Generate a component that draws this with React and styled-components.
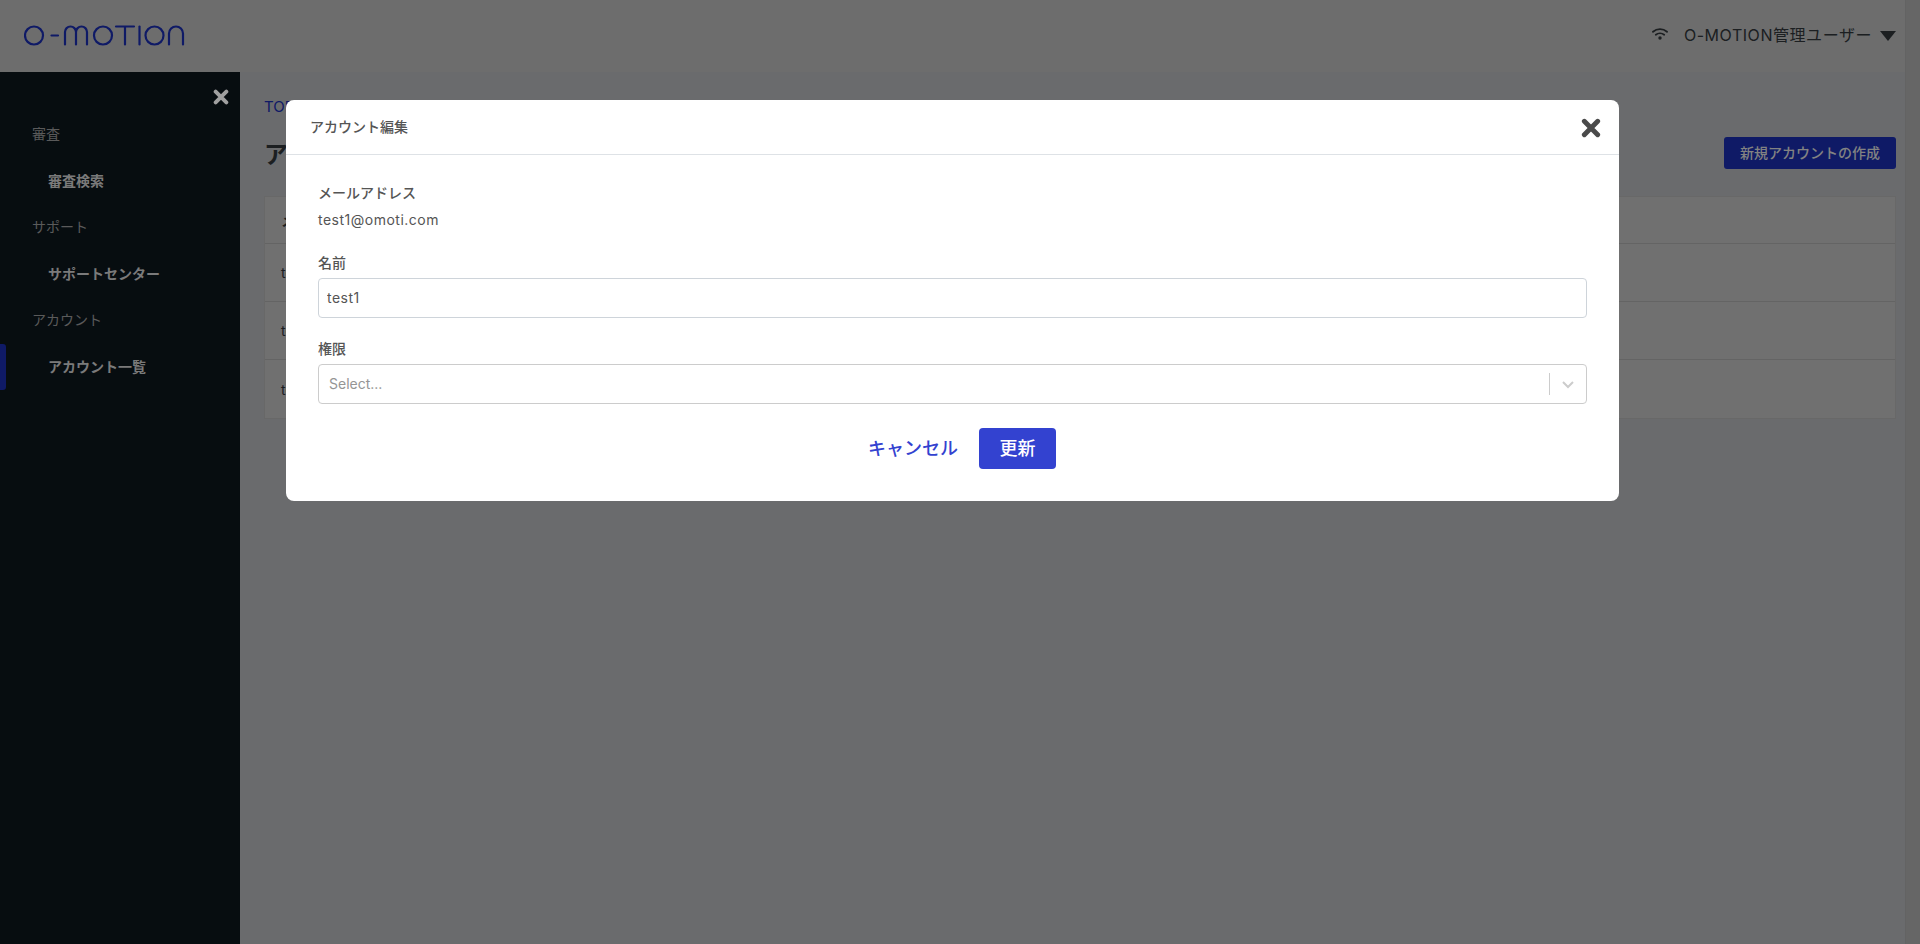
import React from "react";
import styled, { createGlobalStyle } from "styled-components";

const GlobalStyle = createGlobalStyle`
  html, body {
    margin: 0;
    height: 100%;
    overflow: hidden;
  }
  body {
    font-family: Inter, "Noto Sans CJK JP", sans-serif;
    color: #2b3034;
  }
  * {
    box-sizing: border-box;
  }
`;

const Page = styled.div`
  position: relative;
  display: flex;
  width: 1920px;
  height: 944px;
  overflow: hidden;
  background: #a3a5a8;
`;

const Frame = styled.div`
  display: flex;
  flex-direction: column;
  flex: 1;
  min-width: 0;
`;

const ScrollTrack = styled.div`
  width: 15px;
  background: #9d9d9d;
  border-left: 1px solid #999999;
`;

const Header = styled.header`
  display: flex;
  align-items: center;
  justify-content: space-between;
  height: 72px;
  padding: 0 9px 4px 24px;
  background: #a8a8a8;
`;

const LogoWrap = styled.div`
  display: flex;
  padding-top: 2px;
`;

const UserMenu = styled.div`
  display: flex;
  align-items: center;
  font-size: 16px;
  letter-spacing: 0.55px;
  color: #2b3034;
`;

const UserName = styled.span`
  margin: 0 8px 0 16px;
`;

const Caret = styled.span`
  width: 0;
  height: 0;
  border-left: 8px solid transparent;
  border-right: 8px solid transparent;
  border-top: 10px solid #2b3034;
  margin-top: 3px;
`;

const Body = styled.div`
  display: flex;
  flex: 1;
  min-height: 0;
`;

const Sidebar = styled.nav`
  position: relative;
  width: 240px;
  flex-shrink: 0;
  padding-top: 41px;
  background: #0c141a;
`;

const SidebarClose = styled.button`
  position: absolute;
  top: 17px;
  right: 11px;
  display: flex;
  padding: 0;
  border: 0;
  background: none;
  color: #f6f6f6;
`;

const NavGroup = styled.div`
  height: 40px;
  display: flex;
  align-items: center;
  padding-left: 32px;
  font-size: 14px;
  color: #8a8a8a;
`;

const NavItem = styled.div`
  position: relative;
  height: 53px;
  display: flex;
  align-items: center;
  padding-left: 48px;
  font-size: 14px;
  font-weight: 700;
  color: #bcbcbc;

  ${(p) =>
    p.$active &&
    `
    &::before {
      content: "";
      position: absolute;
      left: 0;
      top: 5px;
      width: 6px;
      height: 46px;
      border-radius: 0 3px 3px 0;
      background: #17289d;
    }
  `}
`;

const Main = styled.main`
  flex: 1;
  min-width: 0;
  padding: 26px 9px 0 24px;
`;

const Breadcrumb = styled.a`
  display: block;
  height: 18px;
  font-size: 15px;
  line-height: 18px;
  color: #17289d;
`;

const TitleRow = styled.div`
  display: flex;
  align-items: center;
  justify-content: space-between;
  height: 52px;
  margin-top: 10px;
`;

const Title = styled.h1`
  margin: 0;
  font-size: 24px;
  font-weight: 700;
`;

const CreateButton = styled.button`
  height: 32px;
  padding: 0 16px 3px;
  border: 0;
  border-radius: 3px;
  font: 500 14px Inter, "Noto Sans CJK JP", sans-serif;
  color: #c8c8c8;
  background: #17289d;
  margin-top: 2px;
`;

const Table = styled.div`
  margin-top: 18px;
  background: #acacac;
  border: 1px solid #a0a0a0;
`;

const TableRow = styled.div`
  display: flex;
  align-items: center;
  height: ${(p) => (p.$head ? "47px" : "58px")};
  padding-left: 16px;
  font-size: 14px;
  font-weight: ${(p) => (p.$head ? 700 : 400)};
  border-bottom: 1px solid #9a9a9a;

  &:last-child {
    border-bottom: 0;
  }
`;

const Overlay = styled.div`
  position: absolute;
  inset: 0;
  background: rgba(0, 0, 0, 0.35);
`;

const Modal = styled.div`
  position: absolute;
  left: 286px;
  top: 100px;
  width: 1333px;
  height: 401px;
  background: #fff;
  border-radius: 8px;
  color: #555555;
`;

const ModalHeader = styled.div`
  display: flex;
  align-items: center;
  justify-content: space-between;
  height: 55px;
  padding: 0 18px 2px 24px;
  border-bottom: 1px solid #dee2e6;
  font-size: 14px;
  font-weight: 500;
`;

const ModalClose = styled.button`
  display: flex;
  padding: 0;
  border: 0;
  background: none;
  color: #4a4a4a;
  margin-top: 3px;
`;

const ModalBody = styled.div`
  padding: 28px 32px 0;
`;

const Label = styled.div`
  height: 20px;
  font-size: 14px;
  font-weight: 500;
  line-height: 20px;
  margin-bottom: 5px;
`;

const Value = styled.div`
  height: 24px;
  font-size: 14px;
  line-height: 24px;
  letter-spacing: 0.5px;
  margin-bottom: 21px;
`;

const TextInput = styled.input`
  display: block;
  width: 100%;
  height: 40px;
  padding: 0 8px 2px;
  border: 1px solid #ced4da;
  border-radius: 4px;
  font: 14px Inter, "Noto Sans CJK JP", sans-serif;
  letter-spacing: 0.5px;
  color: #555555;
  margin-bottom: 21px;
  outline: none;
`;

const SelectBox = styled.div`
  display: flex;
  align-items: center;
  height: 40px;
  padding: 0 0 0 10px;
  border: 1px solid #cccccc;
  border-radius: 4px;
  font-size: 14px;
  color: #959595;
`;

const SelectText = styled.span`
  flex: 1;
  padding-bottom: 1px;
`;

const SelectDivider = styled.span`
  width: 1px;
  height: 22px;
  background: #cccccc;
`;

const Chevron = styled.span`
  display: flex;
  justify-content: center;
  width: 36px;
  color: #cccccc;
`;

const Actions = styled.div`
  display: flex;
  align-items: center;
  justify-content: center;
  gap: 21px;
  margin-top: 24px;
  padding-left: 19px;
`;

const CancelButton = styled.button`
  padding: 0 0 3px;
  border: 0;
  background: none;
  font: 500 18px Inter, "Noto Sans CJK JP", sans-serif;
  color: #3342d0;
`;

const SubmitButton = styled.button`
  width: 77px;
  height: 41px;
  padding: 0 0 3px;
  border: 0;
  border-radius: 4px;
  font: 500 18px Inter, "Noto Sans CJK JP", sans-serif;
  color: #fff;
  background: #3342d0;
`;

const CloseIcon = ({ size }) => (
  <svg width={size} height={size} viewBox="0 0 18 18" fill="none">
    <path
      d="M3 3L15 15M15 3L3 15"
      stroke="currentColor"
      strokeWidth="4.4"
      strokeLinecap="round"
    />
  </svg>
);

const Logo = () => (
  <svg width="162" height="21" viewBox="0 0 162 21" fill="none" role="img" aria-label="O-MOTION">
    <g stroke="#17289d" strokeWidth="2.2" strokeLinecap="round" strokeLinejoin="round">
      <circle cx="10" cy="10.500" r="9" />
      <path d="M27.500 10.500H34" />
      <path d="M41 19.500V7a5.500 5.500 0 0 1 11 0V19.500M52 7a5.500 5.500 0 0 1 11 0V19.500" />
      <circle cx="79" cy="10.500" r="9" />
      <path d="M92 1.500H110M101 1.500V19.500" />
      <path d="M115.500 1.500V19.500" />
      <circle cx="130.500" cy="10.500" r="9" />
      <path d="M145 19.500V8.500a7 7 0 0 1 14 0V19.500" />
    </g>
  </svg>
);

const Wifi = () => (
  <svg width="16" height="12" viewBox="0 0 16 12" fill="none">
    <g stroke="#2b3034" strokeWidth="1.800" strokeLinecap="round">
      <path d="M1 3.800C5 0.300 11 0.300 15 3.800" />
      <path d="M3.800 6.800C6.200 4.900 9.800 4.900 12.200 6.800" />
    </g>
    <circle cx="8" cy="10" r="1.700" fill="#2b3034" />
  </svg>
);

export default function App() {
  return (
    <Page>
      <GlobalStyle />
      <Frame>
        <Header>
          <LogoWrap>
            <Logo />
          </LogoWrap>
          <UserMenu>
            <Wifi />
            <UserName>O-MOTION管理ユーザー</UserName>
            <Caret />
          </UserMenu>
        </Header>
        <Body>
          <Sidebar>
            <SidebarClose>
              <CloseIcon size={16} />
            </SidebarClose>
            <NavGroup>審査</NavGroup>
            <NavItem>審査検索</NavItem>
            <NavGroup>サポート</NavGroup>
            <NavItem>サポートセンター</NavItem>
            <NavGroup>アカウント</NavGroup>
            <NavItem $active>アカウント一覧</NavItem>
          </Sidebar>
          <Main>
            <Breadcrumb>TOP</Breadcrumb>
            <TitleRow>
              <Title>アカウント一覧</Title>
              <CreateButton>新規アカウントの作成</CreateButton>
            </TitleRow>
            <Table>
              <TableRow $head>メールアドレス</TableRow>
              <TableRow>test1@omoti.com</TableRow>
              <TableRow>test2@omoti.com</TableRow>
              <TableRow>test3@omoti.com</TableRow>
            </Table>
          </Main>
        </Body>
      </Frame>
      <ScrollTrack />
      <Overlay />
      <Modal>
        <ModalHeader>
          アカウント編集
          <ModalClose>
            <CloseIcon size={20} />
          </ModalClose>
        </ModalHeader>
        <ModalBody>
          <Label>メールアドレス</Label>
          <Value>test1@omoti.com</Value>
          <Label>名前</Label>
          <TextInput defaultValue="test1" />
          <Label>権限</Label>
          <SelectBox>
            <SelectText>Select...</SelectText>
            <SelectDivider />
            <Chevron>
              <svg width="14" height="14" viewBox="0 0 14 14" fill="none">
                <path d="M2 5L7 10L12 5" stroke="currentColor" strokeWidth="2" />
              </svg>
            </Chevron>
          </SelectBox>
          <Actions>
            <CancelButton>キャンセル</CancelButton>
            <SubmitButton>更新</SubmitButton>
          </Actions>
        </ModalBody>
      </Modal>
    </Page>
  );
}
